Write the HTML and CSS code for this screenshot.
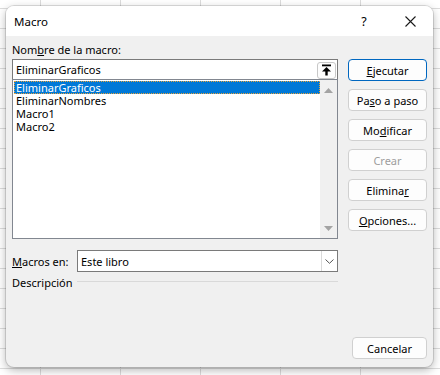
FILE: index.html
```html
<!DOCTYPE html>
<html>
<head>
    <title>Macro</title>
    <meta charset="UTF-8">
    <link rel="stylesheet" href="styles.css">
</head>
<body>
    <div class="dialog">
        <div class="titlebar">
            <span class="title">Macro</span>
            <span class="caption-btn help">?</span>
            <span class="caption-btn close">
                <svg width="11" height="11" viewBox="0 0 11 11">
                    <path d="M0.5 0.5 L10.5 10.5 M10.5 0.5 L0.5 10.5" stroke="#1a1a1a" stroke-width="1.1" fill="none"/>
                </svg>
            </span>
        </div>
        <div class="content">
            <div class="main">
                <div class="label">Nom<u>b</u>re de la macro:</div>
                <div class="name-box">
                    <span class="name-text">EliminarGraficos</span>
                    <span class="pick-btn">
                        <svg width="11" height="12" viewBox="0 0 11 12">
                            <rect x="1" y="0.5" width="9" height="1.8" fill="#000"/>
                            <polygon points="5.5,3 1,7.5 10,7.5" fill="#000"/>
                            <rect x="4.3" y="7" width="2.4" height="4.5" fill="#000"/>
                        </svg>
                    </span>
                </div>
                <div class="list">
                    <ul class="items">
                        <li class="selected">EliminarGraficos</li>
                        <li>EliminarNombres</li>
                        <li>Macro1</li>
                        <li>Macro2</li>
                    </ul>
                    <div class="scrollbar">
                        <svg width="9" height="5" viewBox="0 0 9 5"><polygon points="4.5,0 9,5 0,5" fill="#a3a3a3"/></svg>
                        <svg width="9" height="5" viewBox="0 0 9 5"><polygon points="0,0 9,0 4.5,5" fill="#a3a3a3"/></svg>
                    </div>
                </div>
                <div class="macros-in">
                    <span class="macros-label"><u>M</u>acros en:</span>
                    <div class="select">
                        <span class="select-text">Este libro</span>
                        <span class="drop-btn">
                            <svg width="9" height="5" viewBox="0 0 9 5">
                                <path d="M0.5 0.5 L4.5 4.3 L8.5 0.5" stroke="#555" stroke-width="1" fill="none"/>
                            </svg>
                        </span>
                    </div>
                </div>
                <div class="desc">
                    <span>Descripción</span>
                    <span class="rule"></span>
                </div>
            </div>
            <div class="buttons">
                <button class="btn default"><u>E</u>jecutar</button>
                <button class="btn">Pa<u>s</u>o a paso</button>
                <button class="btn">Mo<u>d</u>ificar</button>
                <button class="btn disabled">Crear</button>
                <button class="btn">Elimina<u>r</u></button>
                <button class="btn"><u>O</u>pciones...</button>
                <button class="btn cancel">Cancelar</button>
            </div>
        </div>
    </div>
</body>
</html>
```

FILE: styles.css
```css
html, body {
    margin: 0;
    height: 100%;
}
body {
    font-family: 'Noto Sans', sans-serif;
    font-size: 11px;
    color: #000;
    background-color: #fff;
    background-image:
        linear-gradient(to right, #dcdcdc 1px, transparent 1px),
        linear-gradient(to bottom, #dcdcdc 1px, transparent 1px);
    background-size: 80px 20px;
    background-position: 40px 8px;
    padding: 6px 0 0 6px;
    box-sizing: border-box;
    overflow: hidden;
}
.dialog {
    width: 427px;
    height: 361px;
    background-color: #f0f0f0;
    border-radius: 8px;
    box-shadow: 0 0 0 1px rgba(0, 0, 0, 0.12), 0 3px 10px rgba(0, 0, 0, 0.3);
    overflow: hidden;
    display: flex;
    flex-direction: column;
}
.titlebar {
    height: 30px;
    flex: none;
    background-color: #fff;
    display: flex;
    align-items: center;
    padding-left: 8px;
}
.title {
    flex: 1;
    font-size: 11.5px;
}
.caption-btn {
    width: 46px;
    height: 30px;
    display: flex;
    align-items: center;
    justify-content: center;
}
.help {
    font-size: 12.5px;
}
.content {
    flex: 1;
    display: flex;
    gap: 10px;
    padding: 6px 6px 8px 6px;
}
.main {
    width: 326px;
    display: flex;
    flex-direction: column;
}
.label {
    line-height: 15px;
    height: 15px;
    margin-bottom: 2px;
}
.name-box {
    height: 20px;
    box-sizing: border-box;
    border: 1px solid #7a7a7a;
    border-bottom: none;
    background-color: #fff;
    display: flex;
    align-items: center;
    padding-left: 3px;
}
.name-text {
    flex: 1;
}
.pick-btn {
    width: 19px;
    height: 17px;
    box-sizing: border-box;
    border: 1px solid #c8c8c8;
    border-radius: 3px;
    background-color: #fdfdfd;
    display: flex;
    align-items: center;
    justify-content: center;
    margin-right: 1px;
    margin-top: 1px;
}
.list {
    height: 160px;
    box-sizing: border-box;
    border: 1px solid #828790;
    background-color: #fff;
    display: flex;
}
.items {
    flex: 1;
    list-style: none;
    margin: 0;
    padding: 1px 0 0 1px;
}
.items li {
    height: 13px;
    line-height: 13px;
    padding-left: 2px;
}
.items li.selected {
    background-color: #0078d7;
    color: #fff;
    outline: 1px dotted #e8a33a;
    outline-offset: -1px;
}
.scrollbar {
    width: 17px;
    background-color: #f0f0f0;
    display: flex;
    flex-direction: column;
    justify-content: space-between;
    align-items: center;
    padding: 8px 0 7px 0;
}
.macros-in {
    display: flex;
    align-items: center;
    margin-top: 11px;
}
.macros-label {
    width: 65px;
}
.select {
    flex: 1;
    height: 22px;
    box-sizing: border-box;
    border: 1px solid #7a7a7a;
    background-color: #fff;
    display: flex;
    align-items: center;
    padding-left: 3px;
}
.select-text {
    flex: 1;
}
.drop-btn {
    width: 16px;
    height: 20px;
    box-sizing: border-box;
    border-left: 1px solid #dadada;
    display: flex;
    align-items: center;
    justify-content: center;
}
.desc {
    display: flex;
    align-items: center;
    height: 16px;
    margin-top: 2px;
}
.rule {
    flex: 1;
    height: 1px;
    background-color: #d9d9d9;
    margin-left: 4px;
    margin-top: -2px;
}
.buttons {
    width: 79px;
    display: flex;
    flex-direction: column;
    gap: 8px;
    padding-top: 17px;
}
.btn {
    height: 22px;
    box-sizing: border-box;
    border: 1px solid #d0d0d0;
    border-radius: 4px;
    background-color: #fdfdfd;
    font-family: 'Noto Sans', sans-serif;
    font-size: 11px;
    color: #000;
    padding: 0;
}
.btn.default {
    border-color: #0067c0;
}
.btn.disabled {
    color: #9d9d9d;
}
.btn.cancel {
    margin-top: auto;
    margin-left: 4px;
    width: 75px;
}
```
